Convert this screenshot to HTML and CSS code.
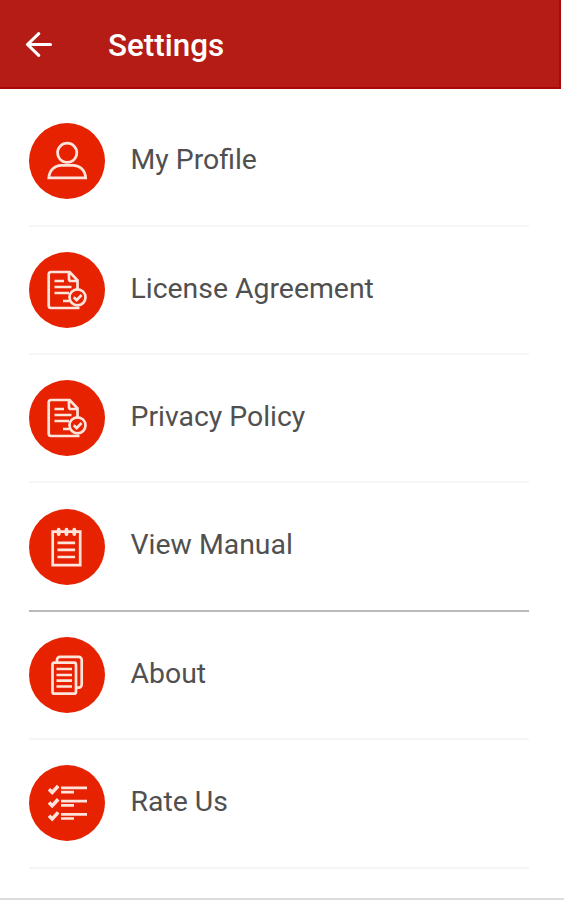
FILE: index.html
```html
<!DOCTYPE html>
<html lang="en">
<head>
<meta charset="utf-8">
<title>Settings</title>
<link rel="stylesheet" href="styles.css">
</head>
<body>
<div class="screen">
  <header class="bar">
    <svg class="back" viewBox="0 0 28 26"><path d="M13.700 1.700 2.500 12.500l11.200 10.800M2.900 12.500H25.500"/></svg>
    <h1 class="title">Settings</h1>
  </header>
  <ul class="list">
    <li class="row"><span class="badge"><svg viewBox="0 0 76 76"><circle cx="38.2" cy="29.8" r="9.6"/><path d="M19.8 54.8C20.4 46.600 26.500 42.300 32 42.300h12c6.500 0 12 4.600 12.700 12.500z"/></svg></span><span class="label">My Profile</span></li>
    <li class="row"><span class="badge"><svg viewBox="0 0 76 76"><path d="M50.500 56H22.200a2.500 2.500 0 0 1-2.500-2.500V22.500a2.500 2.500 0 0 1 2.500-2.500h18.500l7.800 8.300V37M40 20.500v6.500a2 2 0 0 0 2 2h6.500M25.500 29h9.500M25.500 35h17M25.500 41h14.500M34 49h6.500"/><circle cx="48.500" cy="45.300" r="8"/><path d="m44.700 45.200 3 2.800 4.900-5"/></svg></span><span class="label">License Agreement</span></li>
    <li class="row"><span class="badge"><svg viewBox="0 0 76 76"><path d="M50.500 56H22.200a2.500 2.500 0 0 1-2.500-2.500V22.500a2.500 2.500 0 0 1 2.500-2.500h18.500l7.800 8.300V37M40 20.500v6.500a2 2 0 0 0 2 2h6.500M25.500 29h9.500M25.500 35h17M25.500 41h14.500M34 49h6.500"/><circle cx="48.500" cy="45.300" r="8"/><path d="m44.700 45.200 3 2.800 4.900-5"/></svg></span><span class="label">Privacy Policy</span></li>
    <li class="row row-strong"><span class="badge"><svg viewBox="0 0 76 76"><path d="M23.700 22.700h27.500v33.500H23.700zM28.500 33.800h17.600M28.500 40.800h17.600M28.500 48h17.600"/><path class="rings" d="M29.700 20.700v4.400M37.500 20.700v4.400M45.300 20.700v4.400"/></svg></span><span class="label">View Manual</span></li>
    <li class="row"><span class="badge"><svg viewBox="0 0 76 76"><path d="M28 26v-3.200a3 3 0 0 1 3-3h18.700a3 3 0 0 1 3 3v24.800a3 3 0 0 1-3 3h-2"/><rect x="23.500" y="25.700" width="23.500" height="31" rx="2"/><path d="M27.500 32h15.500M27.500 38h15.500M27.500 43.700h15.500M27.500 49.500h15.500"/></svg></span><span class="label">About</span></li>
    <li class="row"><span class="badge"><svg viewBox="0 0 76 76"><path class="check" d="m20 24.300 3.200 3.200 6-6.500M20 37.500l3.200 3.200 6-6.500M20 50.700l3.200 3.200 6-6.500"/><path d="M32 22.900h26M32 27.100h13M32 36.100h26M32 40.300h13M32 49.300h26M32 53.500h13"/></svg></span><span class="label">Rate Us</span></li>
  </ul>
</div>
</body>
</html>
```
FILE: styles.css
```css
* { box-sizing: border-box; }
body { margin: 0; background: #fff; font-family: Roboto, sans-serif; }
.screen {
  width: 564px;
  height: 900px;
  display: flex;
  flex-direction: column;
  border-bottom: 2px solid #dcdcdc;
}
.bar {
  width: 561px;
  height: 88.5px;
  flex: none;
  display: flex;
  align-items: center;
  background: #b41c15;
  border-right: 2px solid #aa0906;
  border-bottom: 2px solid #aa0906;
  padding: 3px 0 0 25px;
}
.back { width: 28px; height: 26px; fill: none; stroke: #fff; stroke-width: 3.1; stroke-linecap: round; stroke-linejoin: round; }
.title { margin: 2px 0 0 55px; font-size: 31.4px; font-weight: 500; line-height: 36px; color: #fff; }
.list { list-style: none; margin: 0; padding: 9.8px 35px 0 29px; }
.row {
  height: 128.4px;
  display: flex;
  align-items: center;
  gap: 25.5px;
  border-bottom: 2px solid #f5f5f5;
}
.row-strong { border-bottom-color: #b9b9b9; }
.badge { width: 76px; height: 76px; flex: none; border-radius: 50%; background: #e62200; }
.badge svg { display: block; width: 76px; height: 76px; fill: none; stroke: #ffe4dc; stroke-width: 2.7; }
.badge .check { stroke-width: 3.6; }
.badge .rings { stroke-width: 3.8; stroke-linecap: round; }
.label { font-size: 28.4px; line-height: 34px; color: #505050; margin-top: -2.4px; }
```
